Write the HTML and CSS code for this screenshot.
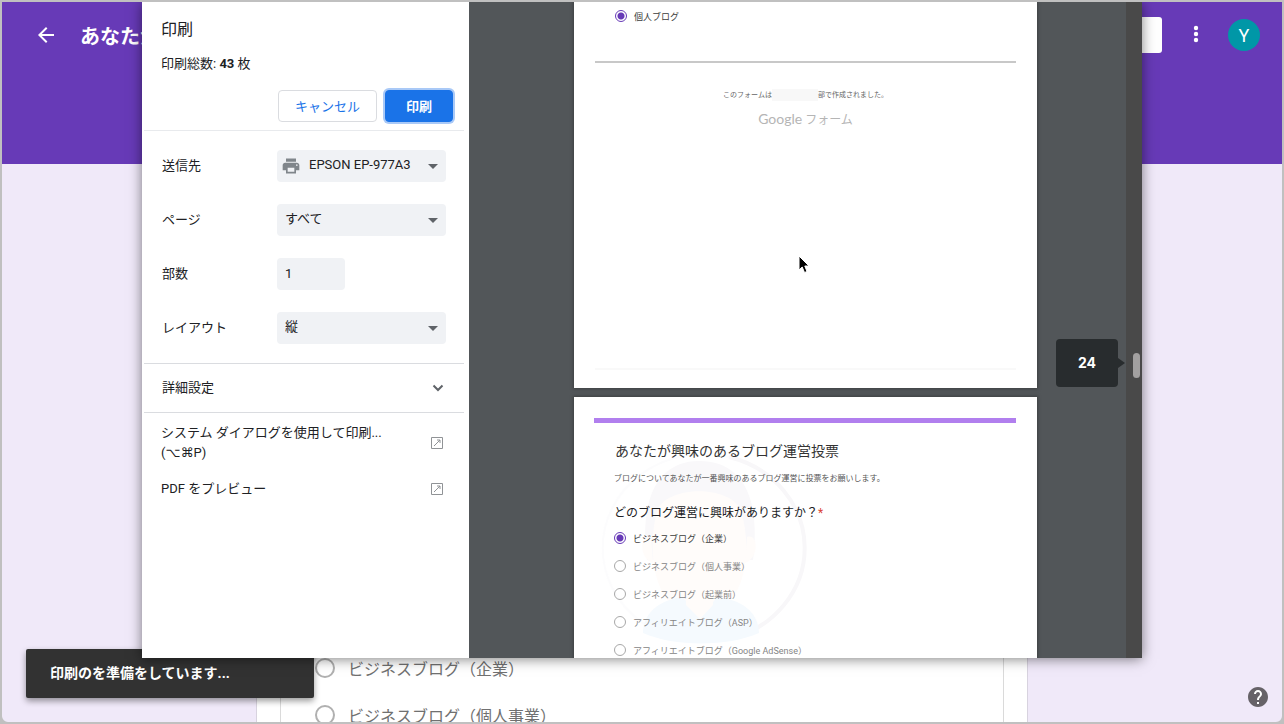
FILE: index.html
```html
<!DOCTYPE html>
<html lang="ja">
<head>
<meta charset="utf-8">
<title>印刷</title>
<link rel="stylesheet" href="styles.css">
</head>
<body>
<div class="window">
  <header class="banner">
    <div class="app-bar">
      <button class="icon-button" aria-label="戻る">
        <svg width="24" height="24" viewBox="0 0 24 24" fill="#fff"><path d="M20 11H7.83l5.59-5.59L12 4l-8 8 8 8 1.41-1.41L7.83 13H20v-2z"/></svg>
      </button>
      <h1 class="app-title">あなたが興味のあるブログ運営投票</h1>
      <button class="send" aria-label="送信"></button>
      <button class="icon-button more" aria-label="その他">
        <svg width="24" height="24" viewBox="0 0 24 24" fill="#fff"><circle cx="12" cy="5" r="2.2"/><circle cx="12" cy="11" r="2.2"/><circle cx="12" cy="17" r="2.2"/></svg>
      </button>
      <button class="avatar">Y</button>
    </div>
  </header>
  <main class="form-sheet">
    <section class="form-card">
      <label class="choice"><input type="radio" name="form" class="radio large">ビジネスブログ（企業）</label>
      <label class="choice"><input type="radio" name="form" class="radio large">ビジネスブログ（個人事業）</label>
    </section>
  </main>

  <div class="toast" role="status">印刷のを準備をしています...</div>
  <button class="help" aria-label="ヘルプ">
    <svg width="24" height="24" viewBox="0 0 24 24"><circle cx="12" cy="12" r="9" fill="#fff"/><path fill="#666268" d="M12 2C6.480 2 2 6.480 2 12s4.480 10 10 10 10-4.480 10-10S17.520 2 12 2zm1 17h-2v-2h2v2zm2.070-7.750l-.9.920C13.450 12.900 13 13.500 13 15h-2v-.5c0-1.100.45-2.100 1.170-2.830l1.240-1.260c.37-.36.590-.86.590-1.410 0-1.100-.9-2-2-2s-2 .9-2 2H8c0-2.210 1.790-4 4-4s4 1.790 4 4c0 .88-.36 1.680-.93 2.250z"/></svg>
  </button>

  <div class="overlay">
    <div class="dialog" role="dialog" aria-label="印刷">
      <form class="settings">
        <div class="summary">
          <h2 class="heading">印刷</h2>
          <p class="total">印刷総数: <b>43</b> 枚</p>
          <div class="actions">
            <button type="button" class="button cancel">キャンセル</button>
            <button type="button" class="button print">印刷</button>
          </div>
        </div>
        <div class="options">
          <div class="row">
            <label for="dest">送信先</label>
            <div class="control">
              <svg class="printer" width="20" height="20" viewBox="0 0 24 24" fill="#80868b"><path d="M19 8H5c-1.660 0-3 1.340-3 3v6h4v4h12v-4h4v-6c0-1.660-1.340-3-3-3zm-3 11H8v-5h8v5zm3-7c-.55 0-1-.45-1-1s.45-1 1-1 1 .45 1 1-.45 1-1 1zm-1-9H6v4h12V3z"/></svg>
              <select id="dest" class="field with-icon"><option>EPSON EP-977A3</option></select>
              <svg class="caret" width="10" height="5" viewBox="0 0 10 5"><path d="M0 0h10L5 5z" fill="#5f6368"/></svg>
            </div>
          </div>
          <div class="row">
            <label for="pages">ページ</label>
            <div class="control">
              <select id="pages" class="field"><option>すべて</option></select>
              <svg class="caret" width="10" height="5" viewBox="0 0 10 5"><path d="M0 0h10L5 5z" fill="#5f6368"/></svg>
            </div>
          </div>
          <div class="row">
            <label for="copies">部数</label>
            <div class="control"><input id="copies" class="field short" type="text" value="1"></div>
          </div>
          <div class="row">
            <label for="layout">レイアウト</label>
            <div class="control">
              <select id="layout" class="field"><option>縦</option></select>
              <svg class="caret" width="10" height="5" viewBox="0 0 10 5"><path d="M0 0h10L5 5z" fill="#5f6368"/></svg>
            </div>
          </div>
        </div>
        <button type="button" class="details">
          <span class="details-label">詳細設定</span>
          <svg width="16" height="16" viewBox="0 0 16 16" fill="none" stroke="#5f6368" stroke-width="2"><path d="M3.500 5.500L8 10l4.500-4.500"/></svg>
        </button>
        <div class="links">
          <a class="link" href="#">
            <span>システム ダイアログを使用して印刷...<br>(<span class="keys">⌥⌘</span>P)</span>
            <svg width="14" height="14" viewBox="0 0 14 14" fill="none" stroke="#909396" stroke-width="1"><path d="M1.500 1.500h11v11h-11zM7 4h3v3M10 4L4 10"/></svg>
          </a>
          <a class="link" href="#">
            <span>PDF をプレビュー</span>
            <svg width="14" height="14" viewBox="0 0 14 14" fill="none" stroke="#909396" stroke-width="1"><path d="M1.500 1.500h11v11h-11zM7 4h3v3M10 4L4 10"/></svg>
          </a>
        </div>
      </form>

      <div class="preview">
        <article class="paper first">
          <label class="answer chosen"><input type="radio" name="p23" class="radio" checked>個人ブログ</label>
          <hr class="rule">
          <p class="credit">このフォームは<span class="masked"></span>部で作成されました。</p>
          <p class="brand"><span class="google">Google</span> フォーム</p>
          <hr class="rule faint">
        </article>
        <article class="paper second">
          <svg class="portrait" width="210" height="200" viewBox="0 0 210 200">
            <path d="M130 2A101 94 0 0 1 130 184" fill="none" stroke="#f8f7f9" stroke-width="4"/>
            <path d="M130 2A101 94 0 1 0 130 184" fill="none" stroke="#fcfcfd" stroke-width="2"/>
            <path d="M48 105C40 45 58 6 100 6s62 34 54 99z" fill="#f9f8fa"/>
            <path d="M58 55C70 30 130 30 142 55c14 50 0 105-42 105S46 105 58 55z" fill="#fffcfa"/>
            <path d="M52 82c-12-4-12 22 2 26zM148 82c12-4 12 22-2 26z" fill="#fffcfa"/>
            <path d="M44 178c0-22 20-34 40-36l17 22 17-22c22 2 42 14 42 36-32 14-84 14-116 0z" fill="#f5fafe"/>
            <path d="M87 136h27v14l-13 14-14-14z" fill="#fffcfa"/>
          </svg>
          <div class="stripe"></div>
          <div class="paper-body">
            <h3 class="paper-title">あなたが興味のあるブログ運営投票</h3>
            <p class="description">ブログについてあなたが一番興味のあるブログ運営に投票をお願いします。</p>
            <h4 class="question">どのブログ運営に興味がありますか？<span class="required">*</span></h4>
            <label class="answer chosen"><input type="radio" name="p24" class="radio" checked>ビジネスブログ（企業）</label>
            <label class="answer"><input type="radio" name="p24" class="radio">ビジネスブログ（個人事業）</label>
            <label class="answer"><input type="radio" name="p24" class="radio">ビジネスブログ（起業前）</label>
            <label class="answer"><input type="radio" name="p24" class="radio">アフィリエイトブログ（ASP）</label>
            <label class="answer"><input type="radio" name="p24" class="radio">アフィリエイトブログ（Google AdSense）</label>
          </div>
        </article>
        <div class="scrollbar"><div class="thumb"></div></div>
        <div class="page-number">24</div>
        <svg class="cursor" width="14" height="20" viewBox="0 0 14 20"><path d="M1 1v14l3.200-3 2.300 5.500 2.500-1L6.800 11H11z" fill="#000" stroke="#fff" stroke-width="1"/></svg>
      </div>
    </div>
  </div>
</div>
</body>
</html>
```

FILE: styles.css
```css
* { box-sizing: border-box; }

body {
  margin: 0;
  background: #c0c0c0;
  color: #202124;
  font-family: Roboto, "Noto Sans CJK JP", sans-serif;
  font-size: 13px;
}

h1, h2, h3, h4, p { margin: 0; font-weight: 400; }

button, input, select { font: inherit; color: inherit; }

button { padding: 0; border: 0; background: none; }

svg { display: block; flex: none; }

.window {
  position: relative;
  display: flex;
  flex-direction: column;
  height: 100vh;
  border: 2px solid #c0c0c0;
  border-radius: 0 0 8px 8px;
  background: #f0e9f9;
  overflow: hidden;
}

/* Form editor behind the dialog */
.banner {
  flex: none;
  height: 162px;
  background: #673ab7;
  color: #fff;
}

.app-bar {
  display: flex;
  align-items: center;
  height: 66px;
  padding: 0 22px 0 32px;
}

.icon-button { flex: none; width: 24px; height: 24px; }

.app-title {
  flex: 1;
  min-width: 0;
  margin-left: 22px;
  font-size: 20px;
  font-weight: 700;
  white-space: nowrap;
  overflow: hidden;
}

.send {
  width: 96px;
  height: 36px;
  border-radius: 3px;
  background: #fff;
}

.more { margin: 0 20px 0 22px; }

.avatar {
  width: 32px;
  height: 32px;
  border-radius: 50%;
  background: #0097a7;
  font-size: 18px;
}

.form-sheet {
  flex: 1;
  width: 772px;
  margin: 0 auto;
  padding: 0 23px;
  background: #fff;
  border: 1px solid #d8d3df;
}

.form-card {
  height: 100%;
  padding: 491px 34px 0;
  border: solid #dadada;
  border-width: 0 1px;
}

.choice {
  display: flex;
  align-items: center;
  gap: 13px;
  height: 24px;
  margin-bottom: 23px;
  font-size: 16px;
  color: #707070;
  white-space: nowrap;
}

.radio {
  flex: none;
  appearance: none;
  width: 12px;
  height: 12px;
  margin: 0;
  border: 1px solid #a8a8a8;
  border-radius: 50%;
}

.radio:checked {
  border-color: #673ab7;
  background: radial-gradient(circle, #673ab7 0 3px, transparent 4px);
}

.radio.large { width: 20px; height: 20px; border: 2px solid #b0b0b0; }

.toast {
  position: absolute;
  left: 24px;
  bottom: 24px;
  width: 288px;
  padding: 12px 24px;
  border-radius: 2px;
  background: #323232;
  box-shadow: 0 3px 6px rgba(0, 0, 0, .4);
  color: #fff;
  font-size: 14px;
  font-weight: 700;
  line-height: 25px;
}

.help { position: absolute; right: 12px; bottom: 13px; }

/* Print dialog */
.overlay {
  position: absolute;
  inset: 0;
  display: flex;
  justify-content: center;
  align-items: flex-start;
}

.dialog {
  display: flex;
  width: 1000px;
  height: calc(100vh - 68px);
  background: #fff;
  box-shadow: 0 1px 12px rgba(0, 0, 0, .5);
}

.settings { flex: none; width: 327px; padding: 0 5px 0 2px; }

.summary {
  padding: 16px 11px 8px 17px;
  border-bottom: 1px solid #e8eaed;
}

.heading { font-size: 16px; line-height: 24px; }

.total { margin-top: 12px; line-height: 20px; }

.actions {
  display: flex;
  justify-content: flex-end;
  gap: 8px;
  margin-top: 16px;
}

.button {
  height: 32px;
  padding-bottom: 2px;
  border: 1px solid #dadce0;
  border-radius: 4px;
}

.cancel { width: 99px; color: #1a73e8; background: #fff; }

.print {
  width: 68px;
  border-color: #1a73e8;
  background: #1a73e8;
  box-shadow: 0 0 0 2px #a9c9f7;
  color: #fff;
  font-weight: 700;
}

.options {
  display: grid;
  gap: 22px;
  padding: 19px 18px;
  border-bottom: 1px solid #dadce0;
}

.row {
  display: grid;
  grid-template-columns: 1fr 169px;
  align-items: center;
  line-height: 20px;
}

.control { position: relative; height: 32px; }

.field {
  display: block;
  appearance: none;
  width: 100%;
  height: 32px;
  padding: 0 24px 2px 8px;
  border: 0;
  border-radius: 4px;
  background: #f0f2f5;
}

.with-icon { padding-left: 32px; }

.short { width: 68px; }

.printer { position: absolute; left: 4px; top: 6px; }

.caret { position: absolute; right: 8px; top: 14px; }

.details {
  display: flex;
  justify-content: space-between;
  align-items: center;
  width: 100%;
  height: 49px;
  padding: 0 18px;
  border-bottom: 1px solid #dadce0;
}

.details-label { padding-bottom: 4px; }

.links { display: grid; gap: 16px; padding: 10px 20px 0 17px; }

.link {
  display: flex;
  justify-content: space-between;
  align-items: center;
  color: inherit;
  line-height: 20px;
  text-decoration: none;
}

.keys { font-family: "DejaVu Sans", sans-serif; }

/* Preview pane */
.preview {
  position: relative;
  flex: 1;
  display: flex;
  flex-direction: column;
  align-items: center;
  gap: 9px;
  background: #525659;
  overflow: hidden;
}

.paper {
  position: relative;
  flex: none;
  width: 463px;
  padding: 8px 21px 18px;
  background: #fff;
  box-shadow: 0 0 3px 1px #3e4142;
}

.answer {
  display: flex;
  align-items: center;
  gap: 7px;
  height: 12px;
  font-size: 9px;
  color: #858585;
}

.chosen { color: #3c3c3c; }

.first .answer { margin-left: 20px; }

.rule {
  height: 2px;
  margin: 39px 0 0;
  border: 0;
  background: #c8c8c8;
}

.credit {
  display: flex;
  justify-content: center;
  margin-top: 26px;
  font-size: 7px;
  line-height: 12px;
  color: #666;
}

.masked { width: 46px; background: #f8f8f8; }

.brand {
  margin-top: 8px;
  font-size: 12px;
  line-height: 20px;
  color: #b5b5b5;
  text-align: center;
}

.google { font-family: Lato, sans-serif; font-size: 14px; }

.rule.faint { margin-top: 238px; background: #f9f9f9; }

.second { min-height: 656px; padding-top: 21px; padding-left: 20px; }

.portrait { position: absolute; left: 25px; top: 58px; }

.stripe { height: 5px; background: #b17fee; }

.paper-body { position: relative; padding: 18px 0 0 20px; }

.paper-title { padding-left: 1px; font-size: 14px; line-height: 20px; color: #333; }

.description {
  margin-top: 12px;
  font-size: 8px;
  line-height: 12px;
  color: #555;
}

.question {
  margin: 18px 0 9px;
  font-size: 12px;
  line-height: 20px;
}

.required { color: #db4437; }

.paper-body .answer { margin-bottom: 16px; }

.scrollbar {
  position: absolute;
  top: 0;
  right: 0;
  bottom: 0;
  width: 16px;
  background: #494949;
}

.thumb {
  height: 25px;
  margin: 351px 2px 0 7px;
  border-radius: 4px;
  background: #a2a0a0;
}

.page-number {
  position: absolute;
  top: 337px;
  right: 24px;
  width: 62px;
  border-radius: 4px;
  background: #282c2e;
  color: #fff;
  font: 700 14px/48px Inter, sans-serif;
  text-align: center;
}

.page-number::after {
  content: "";
  position: absolute;
  left: 100%;
  top: 19px;
  border: 5px solid transparent;
  border-left: 7px solid #282c2e;
  border-right: 0;
}

.cursor { position: absolute; left: 329px; top: 253px; }
```
